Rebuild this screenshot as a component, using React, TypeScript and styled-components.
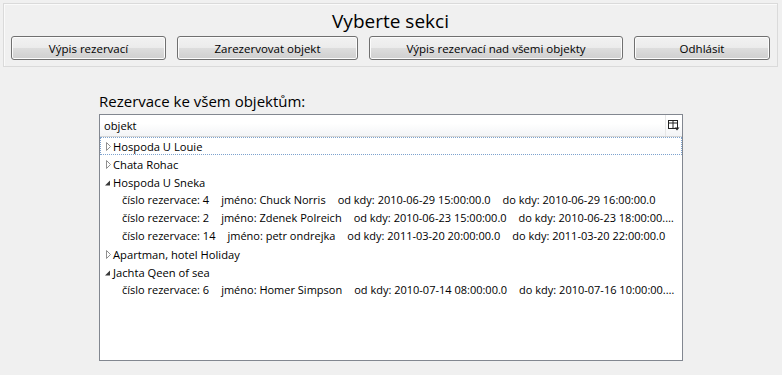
import styled, { createGlobalStyle } from "styled-components";

interface IReservation {
    id: number;
    name: string;
    from: string;
    to: string;
}

interface IObject {
    title: string;
    open: boolean;
    items: IReservation[];
}

const data: IObject[] = [
    { title: 'Hospoda U Louie', open: false, items: [] },
    { title: 'Chata Rohac', open: false, items: [] },
    {
        title: 'Hospoda U Sneka', open: true, items: [
            { id: 4, name: 'Chuck Norris', from: '2010-06-29 15:00:00.0', to: '2010-06-29 16:00:00.0' },
            { id: 2, name: 'Zdenek Polreich', from: '2010-06-23 15:00:00.0', to: '2010-06-23 18:00:00.0' },
            { id: 14, name: 'petr ondrejka', from: '2011-03-20 20:00:00.0', to: '2011-03-20 22:00:00.0' },
        ]
    },
    { title: 'Apartman, hotel Holiday', open: false, items: [] },
    {
        title: 'Jachta Qeen of sea', open: true, items: [
            { id: 6, name: 'Homer Simpson', from: '2010-07-14 08:00:00.0', to: '2010-07-16 10:00:00.0' },
        ]
    },
];

const buttons = [
    { label: 'Výpis rezervací', width: 155 },
    { label: 'Zarezervovat objekt', width: 181 },
    { label: 'Výpis rezervací nad všemi objekty', width: 254 },
    { label: 'Odhlásit', width: 136 },
];

const Expander = ({ open }: { open: boolean }) => open
    ? <svg width="9" height="9" viewBox="0 0 9 9"><path d="M7 2.5 L7 7.5 L2 7.5 Z" fill="#3a3a3a" /></svg>
    : <svg width="9" height="9" viewBox="0 0 9 9"><path d="M3.5 0.5 L7.5 4.5 L3.5 8.5 Z" fill="#fff" stroke="#909090" strokeWidth="1" /></svg>;

const ColumnsIcon = () => (
    <svg width="12" height="11" viewBox="0 0 12 11">
        <rect x="0.5" y="0.5" width="9" height="8" fill="#fff" stroke="#222" />
        <line x1="0.5" y1="3" x2="9.5" y2="3" stroke="#222" />
        <line x1="5" y1="0.5" x2="5" y2="8.5" stroke="#222" />
        <path d="M6.5 7.5 L11.5 7.5 L9 10.5 Z" fill="#222" />
    </svg>
);

export default function App() {
    return (
        <>
            <GlobalStyle />
            <Panel>
                <Title>Vyberte sekci</Title>
                <ButtonRow>
                    {buttons.map(b => <Button key={b.label} w={b.width} type="button">{b.label}</Button>)}
                </ButtonRow>
            </Panel>
            <Content>
                <Label>Rezervace ke všem objektům:</Label>
                <Table>
                    <Header>
                        <HeaderCell>objekt</HeaderCell>
                        <HeaderIcon><ColumnsIcon /></HeaderIcon>
                    </Header>
                    {data.map((o, i) => (
                        <div key={o.title}>
                            <GroupRow selected={i === 0}>
                                <Arrow><Expander open={o.open} /></Arrow>
                                {o.title}
                            </GroupRow>
                            {o.open && o.items.map(r => (
                                <ItemRow key={r.id}>
                                    <Field>číslo rezervace: {r.id}</Field>
                                    <Field>jméno: {r.name}</Field>
                                    <Field>od kdy: {r.from}</Field>
                                    <Field>do kdy: {r.to}</Field>
                                </ItemRow>
                            ))}
                        </div>
                    ))}
                </Table>
            </Content>
        </>
    );
}

const GlobalStyle = createGlobalStyle`
    body {
        margin: 0;
        background: #f0f0f0;
        font-family: "Open Sans", "Noto Sans", sans-serif;
        color: #000;
    }
`

const Panel = styled.div`
    margin: 3px 4px 0 3px;
    height: 62px;
    border: 1px solid #dadada;
    box-shadow: inset 1px 1px 0 #fafafa;
    display: flex;
    flex-direction: column;
    align-items: stretch;
`

const Title = styled.div`
    height: 31px;
    display: flex;
    align-items: center;
    justify-content: center;
    font-size: 19px;
    padding-top: 1px;
`

const ButtonRow = styled.div`
    display: flex;
    gap: 11px;
    padding-left: 7px;
`

const Button = styled.button<{ w: number }>`
    width: ${(props) => props.w}px;
    height: 24px;
    border: 1px solid #707070;
    border-radius: 3px;
    background: linear-gradient(to bottom, #f2f2f2 0%, #ebebeb 50%, #dddddd 51%, #cfcfcf 100%);
    box-shadow: inset 0 0 0 1px #fcfcfc;
    font-family: "Open Sans", "Noto Sans", sans-serif;
    font-size: 11.5px;
    color: #000;
    padding: 0;
`

const Content = styled.div`
    padding: 24px 0 0 99px;
`

const Label = styled.div`
    font-size: 15px;
    height: 23px;
    line-height: 21px;
`

const Table = styled.div`
    width: 582px;
    height: 245px;
    border: 1px solid #828790;
    background: #fff;
    overflow: hidden;
    font-size: 11.2px;
`

const Header = styled.div`
    height: 21px;
    display: flex;
    background: linear-gradient(to bottom, #ffffff 0%, #ffffff 40%, #f3f4f6 100%);
    border-bottom: 1px solid #d5d5d5;
`

const HeaderCell = styled.div`
    flex: 1;
    padding-left: 4px;
    display: flex;
    align-items: center;
`

const HeaderIcon = styled.div`
    width: 16px;
    border-left: 1px solid #e6e6e6;
    display: flex;
    align-items: center;
    justify-content: center;
`

const GroupRow = styled.div<{ selected: boolean }>`
    height: 18px;
    display: flex;
    align-items: center;
    box-sizing: border-box;
    border: 1px dotted ${(props) => props.selected ? '#7da2ce' : 'transparent'};
    padding-left: 2px;
    white-space: nowrap;
`

const Arrow = styled.span`
    width: 10px;
    display: flex;
    align-items: center;
`

const ItemRow = styled.div`
    height: 18px;
    line-height: 18px;
    padding: 0 3px 0 22px;
    font-size: 11px;
    white-space: nowrap;
    overflow: hidden;
    text-overflow: ellipsis;
`

const Field = styled.span`
    margin-right: 12px;
`
